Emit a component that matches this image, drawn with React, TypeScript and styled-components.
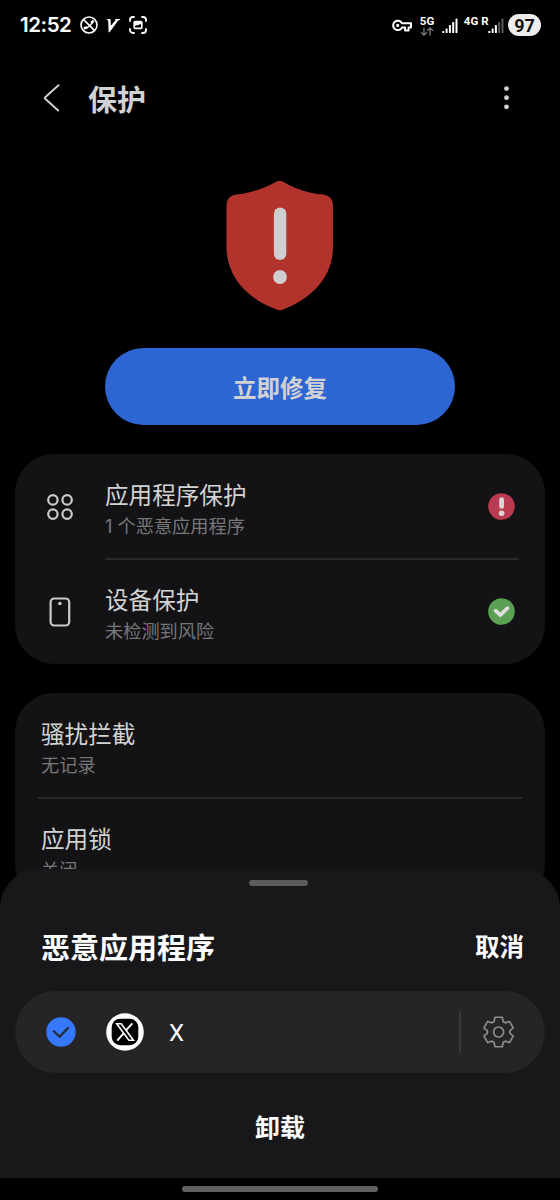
import React from 'react';
import styled, { createGlobalStyle } from 'styled-components';

const GlobalStyle = createGlobalStyle`
  * { box-sizing: border-box; }
  html, body { margin: 0; padding: 0; background: #000; }
  body { font-family: Inter, "Noto Sans CJK SC", sans-serif; }
  button { font: inherit; color: inherit; border: 0; padding: 0; background: none; }
  svg { display: block; flex: none; }
`;

const Screen = styled.div`
  position: relative;
  width: 560px;
  height: 1200px;
  overflow: hidden;
  background: #000;
  color: #d2d2d4;
`;

const StatusBar = styled.header`
  display: flex;
  align-items: center;
  justify-content: space-between;
  height: 50px;
  padding: 0 19px 0 20px;
  color: #fff;
`;

const StatusGroup = styled.div`
  display: flex;
  align-items: center;
`;

const Clock = styled.span`
  width: 59px;
  font-size: 20.5px;
  font-weight: 600;
  line-height: 24px;
  letter-spacing: -0.45px;
  white-space: nowrap;
`;

const Network = styled.span<{ $w: number }>`
  display: flex;
  flex-direction: column;
  align-items: center;
  gap: 1px;
  width: ${p => p.$w}px;
  height: 19px;
  font-family: Roboto, sans-serif;
  font-size: 11.5px;
  font-weight: 700;
  line-height: 10px;
  white-space: nowrap;
`;

const Battery = styled.span`
  width: 33px;
  height: 22px;
  margin-left: 4px;
  border-radius: 11px;
  background: #ededed;
  color: #111;
  font-family: Roboto, sans-serif;
  font-size: 18px;
  font-weight: 700;
  line-height: 23px;
  text-align: center;
`;

const TitleBar = styled.div`
  display: flex;
  align-items: center;
  height: 96px;
  padding: 0 47px 0 43px;
`;

const PageTitle = styled.h1`
  flex: 1;
  margin: 5px 0 0 28px;
  font-size: 29px;
  font-weight: 700;
  line-height: 40px;
`;

const Hero = styled.section`
  display: flex;
  flex-direction: column;
  align-items: center;
  gap: 37px;
  padding-top: 34px;
`;

const FixButton = styled.button`
  width: 350px;
  height: 77px;
  border-radius: 39px;
  background: #2d65d2;
  font-size: 23.5px;
  font-weight: 700;
  line-height: 77px;
  padding-top: 2px;
`;

const Card = styled.section<{ $top: number }>`
  display: flex;
  flex-direction: column;
  margin: ${p => p.$top}px 15px 0;
  border-radius: 39px;
  background: #131315;
`;

const Row = styled.div<{ $inset: number }>`
  display: flex;
  align-items: center;
  height: 105px;
  padding: 0 30px 0 ${p => p.$inset}px;
`;

const RowIcon = styled.span`
  display: flex;
  justify-content: center;
  width: 30px;
  margin-right: 30px;
`;

const RowText = styled.div`
  display: flex;
  flex: 1;
  flex-direction: column;
  padding-top: 6px;
`;

const RowTitle = styled.span`
  font-size: 23.6px;
  line-height: 34px;
`;

const RowNote = styled.span`
  color: #77777a;
  font-size: 18.2px;
  line-height: 27px;
`;

const Divider = styled.hr<{ $left: number; $right: number }>`
  height: 2px;
  margin: -1px ${p => p.$right}px -1px ${p => p.$left}px;
  border: 0;
  background: #29292b;
`;

const Sheet = styled.section`
  position: absolute;
  left: 0;
  right: 0;
  bottom: 22px;
  display: flex;
  flex-direction: column;
  height: 309px;
  border-radius: 39px 39px 0 0;
  background: #18181a;
  color: #fcfcff;
`;

const Grip = styled.div`
  width: 59px;
  height: 6px;
  margin: 11px 0 0 249px;
  border-radius: 3px;
  background: #5c5c5e;
`;

const SheetHeader = styled.div`
  display: flex;
  align-items: center;
  justify-content: space-between;
  height: 105px;
  padding: 17px 36px 0 41px;
`;

const SheetTitle = styled.h2`
  margin: 3px 0 0;
  font-size: 29px;
  font-weight: 700;
  line-height: 42px;
`;

const CancelButton = styled.button`
  font-size: 24.5px;
  font-weight: 700;
  line-height: 36px;
`;

const AppRow = styled.div`
  display: flex;
  align-items: center;
  height: 82px;
  margin: 0 15px;
  padding: 0 30px 0 31px;
  border-radius: 41px;
  background: #252527;
`;

const AppIcon = styled.span`
  margin: 0 25px 0 30px;
`;

const AppName = styled.span`
  flex: 1;
  padding-top: 1px;
  font-family: Roboto, sans-serif;
  font-size: 24px;
  line-height: 30px;
`;

const Separator = styled.span`
  width: 2px;
  height: 42px;
  margin-right: 22px;
  background: #38383b;
`;

const UninstallButton = styled.button`
  height: 105px;
  padding-top: 1px;
  font-size: 25px;
  font-weight: 700;
`;

const NavBar = styled.nav`
  position: absolute;
  left: 0;
  right: 0;
  bottom: 0;
  display: flex;
  align-items: center;
  justify-content: center;
  height: 22px;
  background: #000;
`;

const NavHandle = styled.span`
  width: 196px;
  height: 6px;
  border-radius: 3px;
  background: #606060;
`;

const CallBlockedIcon = () => (
  <svg width="18" height="18" viewBox="0 0 18 18" fill="none" stroke="#fff" strokeWidth="1.6">
    <circle cx="9" cy="9" r="8" />
    <path d="M3.4 3.4 14.6 14.6" />
    <path d="M4.6 12.2C8 12 12 9 12.600 5" strokeWidth="1.5" />
    <path d="M3.800 12.600 7 11.200M11.200 7l2.400-2.400" strokeWidth="2.600" />
  </svg>
);

const VIcon = () => (
  <svg width="15" height="15" viewBox="0 0 15 15" fill="#fff">
    <path d="M.5 1h4l.3 6.800L9.500 2.300 9 1h5.700L11.800 3 3.600 14.300h-1L2.200 2.700Z" />
  </svg>
);

const CaptureIcon = () => (
  <svg width="18" height="18" viewBox="0 0 18 18" fill="none" stroke="#fff" strokeWidth="1.8" strokeLinecap="round">
    <path d="M1 5V4a3 3 0 0 1 3-3h1M13 1h1a3 3 0 0 1 3 3v1M17 13v1a3 3 0 0 1-3 3h-1M5 17H4a3 3 0 0 1-3-3v-1" />
    <rect x="4.4" y="4.8" width="9.2" height="8.4" rx="1.7" fill="#fff" stroke="none" />
    <path d="M6 11.400V10l1.800-1 1.200.5 1.800-1.600 1.200.8v2.700Z" fill="#000" stroke="none" />
  </svg>
);

const KeyIcon = () => (
  <svg width="20" height="13" viewBox="0 0 20 13" fill="none" stroke="#fff" strokeWidth="2" strokeLinejoin="round">
    <path d="M10 4.200A4.700 4.700 0 1 0 10 8.600h3.100v2.800h3.500V8.600H19V4.200Z" />
    <circle cx="5.700" cy="6.400" r="1" fill="#fff" strokeWidth="1.200" />
  </svg>
);

const DataArrows = () => (
  <svg width="14" height="9" viewBox="0 0 14 9" fill="none" stroke="#77777a" strokeWidth="1.3">
    <path d="M4 .5V8M1 5.200 4 8l3-2.800M10 8.500V1M7 3.800 10 1l3 2.800" />
  </svg>
);

const Signal = ({ active }: { active: number }) => (
  <svg width="16" height="15" viewBox="0 0 16 15">
    {[2, 4.5, 8, 11, 14.5].map((h, i) => (
      <rect key={h} x={0.3 + i * 3.3} y={15 - h} width="2" height={h} rx=".6" fill={i < active ? '#fff' : '#58585a'} />
    ))}
  </svg>
);

const BackIcon = () => (
  <svg width="17" height="28" viewBox="0 0 17 28" fill="none" stroke="#d2d2d4" strokeWidth="1.9" strokeLinecap="round" strokeLinejoin="round">
    <path d="M15.500 1.200 2.200 13.200a1.100 1.100 0 0 0 0 1.600L15.200 26.500" />
  </svg>
);

const MoreIcon = () => (
  <svg width="12" height="24" viewBox="0 0 12 24" fill="#d2d2d4">
    <circle cx="5.500" cy="2.600" r="2.400" />
    <circle cx="5.500" cy="11.700" r="2.400" />
    <circle cx="5.500" cy="20.800" r="2.400" />
  </svg>
);

const ShieldIcon = () => (
  <svg width="108" height="131" viewBox="0 0 108 131">
    <path
      d="M50.200 1.700Q53.700 0 57.200 1.700C68.500 8.500 82 13 97 14.600Q107 16 107 25.500V67C107 96 87 118 57 129.600Q53.700 131 50.500 129.600C20 118 .5 96 .5 67V25.500Q.5 16 10 14.600C25 13 38.500 8.500 50.200 1.700Z"
      fill="#b1332c"
    />
    <rect x="47.900" y="27.500" width="12.400" height="52.500" rx="6.200" fill="#cfcfcf" />
    <circle cx="54" cy="97" r="6.900" fill="#cfcfcf" />
  </svg>
);

const AppsIcon = () => (
  <svg width="28" height="28" viewBox="0 0 28 28" fill="none" stroke="#cacacc" strokeWidth="2.200">
    <circle cx="6.900" cy="6.900" r="4.700" />
    <circle cx="21.100" cy="6.900" r="4.700" />
    <circle cx="6.900" cy="21.100" r="4.700" />
    <circle cx="21.100" cy="21.100" r="4.700" />
  </svg>
);

const DeviceIcon = () => (
  <svg width="22" height="30" viewBox="0 0 22 30">
    <rect x="1.600" y="1.500" width="18.600" height="27" rx="3.800" fill="none" stroke="#cacacc" strokeWidth="2.200" />
    <circle cx="10.900" cy="6.500" r="1.800" fill="#cacacc" />
  </svg>
);

const AlertBadge = () => (
  <svg width="27" height="27" viewBox="0 0 27 27">
    <circle cx="13.500" cy="13.500" r="13.300" fill="#b93b50" />
    <rect x="11.200" y="4.300" width="4.800" height="11.400" rx="2.200" fill="#d9d4d5" />
    <circle cx="13.600" cy="20.300" r="2.800" fill="#d9d4d5" />
  </svg>
);

const OkBadge = () => (
  <svg width="27" height="27" viewBox="0 0 27 27">
    <circle cx="13.500" cy="13.500" r="13.300" fill="#5ba053" />
    <path d="m7.600 12.700 4.700 4.500 7.200-7" fill="none" stroke="#dedede" strokeWidth="3.700" strokeLinecap="round" strokeLinejoin="round" />
  </svg>
);

const CheckedIcon = () => (
  <svg width="30" height="30" viewBox="0 0 30 30">
    <circle cx="15" cy="15" r="14.700" fill="#3678fa" />
    <path d="m7.800 14.200 5.800 5.600 8.400-8.800" fill="none" stroke="#242a36" strokeWidth="2.200" strokeLinecap="round" strokeLinejoin="round" />
  </svg>
);

const XAppIcon = () => (
  <svg width="38" height="38" viewBox="0 0 38 38">
    <circle cx="19" cy="19" r="18.800" fill="#fff" />
    <rect x="5.700" y="5.700" width="26.600" height="26.600" rx="8.500" fill="#000" />
    <g fill="none" stroke="#fff">
      <path d="M10.700 10.800h4.500l12.200 16.400h-4.500Z" strokeWidth="1.600" />
      <path d="m26.300 10.300-6.500 7.300M17.800 20.200l-6.600 7.500" strokeWidth="1.900" />
    </g>
  </svg>
);

const GearIcon = () => {
  const outline = Array.from({ length: 6 }, (_, tooth) =>
    [[-24, 11.3], [-14, 15.2], [14, 15.2], [24, 11.3]].map(([offset, radius]) => {
      const angle = ((tooth * 60 + offset) * Math.PI) / 180;
      return `${15.6 + Math.sin(angle) * radius},${16 - Math.cos(angle) * radius}`;
    }).join(' ')
  ).join(' ');
  return (
    <svg width="32" height="32" viewBox="0 0 32 32" fill="none" stroke="#8c8c8e" strokeWidth="1.700" strokeLinejoin="round">
      <polygon points={outline} />
      <circle cx="15.600" cy="16" r="5" />
    </svg>
  );
};

const Gap = styled.span<{ $w: number }>`
  width: ${p => p.$w}px;
`;

export default function App() {
  return (
    <Screen>
      <GlobalStyle />
      <StatusBar>
        <StatusGroup>
          <Clock>12:52</Clock>
          <Gap $w={1} />
          <CallBlockedIcon />
          <Gap $w={8} />
          <VIcon />
          <Gap $w={8} />
          <CaptureIcon />
        </StatusGroup>
        <StatusGroup>
          <KeyIcon />
          <Gap $w={7} />
          <Network $w={16}>5G<DataArrows /></Network>
          <Gap $w={7} />
          <Signal active={5} />
          <Gap $w={5} />
          <Network $w={16}>4G</Network>
          <Gap $w={3} />
          <Network $w={6}>R</Network>
          <Signal active={3} />
          <Battery>97</Battery>
        </StatusGroup>
      </StatusBar>

      <TitleBar>
        <BackIcon />
        <PageTitle>保护</PageTitle>
        <MoreIcon />
      </TitleBar>

      <Hero>
        <ShieldIcon />
        <FixButton>立即修复</FixButton>
      </Hero>

      <Card $top={29}>
        <Row $inset={30}>
          <RowIcon><AppsIcon /></RowIcon>
          <RowText>
            <RowTitle>应用程序保护</RowTitle>
            <RowNote>1 个恶意应用程序</RowNote>
          </RowText>
          <AlertBadge />
        </Row>
        <Divider $left={90} $right={26} />
        <Row $inset={30}>
          <RowIcon><DeviceIcon /></RowIcon>
          <RowText>
            <RowTitle>设备保护</RowTitle>
            <RowNote>未检测到风险</RowNote>
          </RowText>
          <OkBadge />
        </Row>
      </Card>

      <Card $top={29}>
        <Row $inset={26}>
          <RowText>
            <RowTitle>骚扰拦截</RowTitle>
            <RowNote>无记录</RowNote>
          </RowText>
        </Row>
        <Divider $left={23} $right={23} />
        <Row $inset={26}>
          <RowText>
            <RowTitle>应用锁</RowTitle>
            <RowNote>关闭</RowNote>
          </RowText>
        </Row>
      </Card>

      <Sheet>
        <Grip />
        <SheetHeader>
          <SheetTitle>恶意应用程序</SheetTitle>
          <CancelButton>取消</CancelButton>
        </SheetHeader>
        <AppRow>
          <CheckedIcon />
          <AppIcon><XAppIcon /></AppIcon>
          <AppName>X</AppName>
          <Separator />
          <GearIcon />
        </AppRow>
        <UninstallButton>卸载</UninstallButton>
      </Sheet>

      <NavBar><NavHandle /></NavBar>
    </Screen>
  );
}
